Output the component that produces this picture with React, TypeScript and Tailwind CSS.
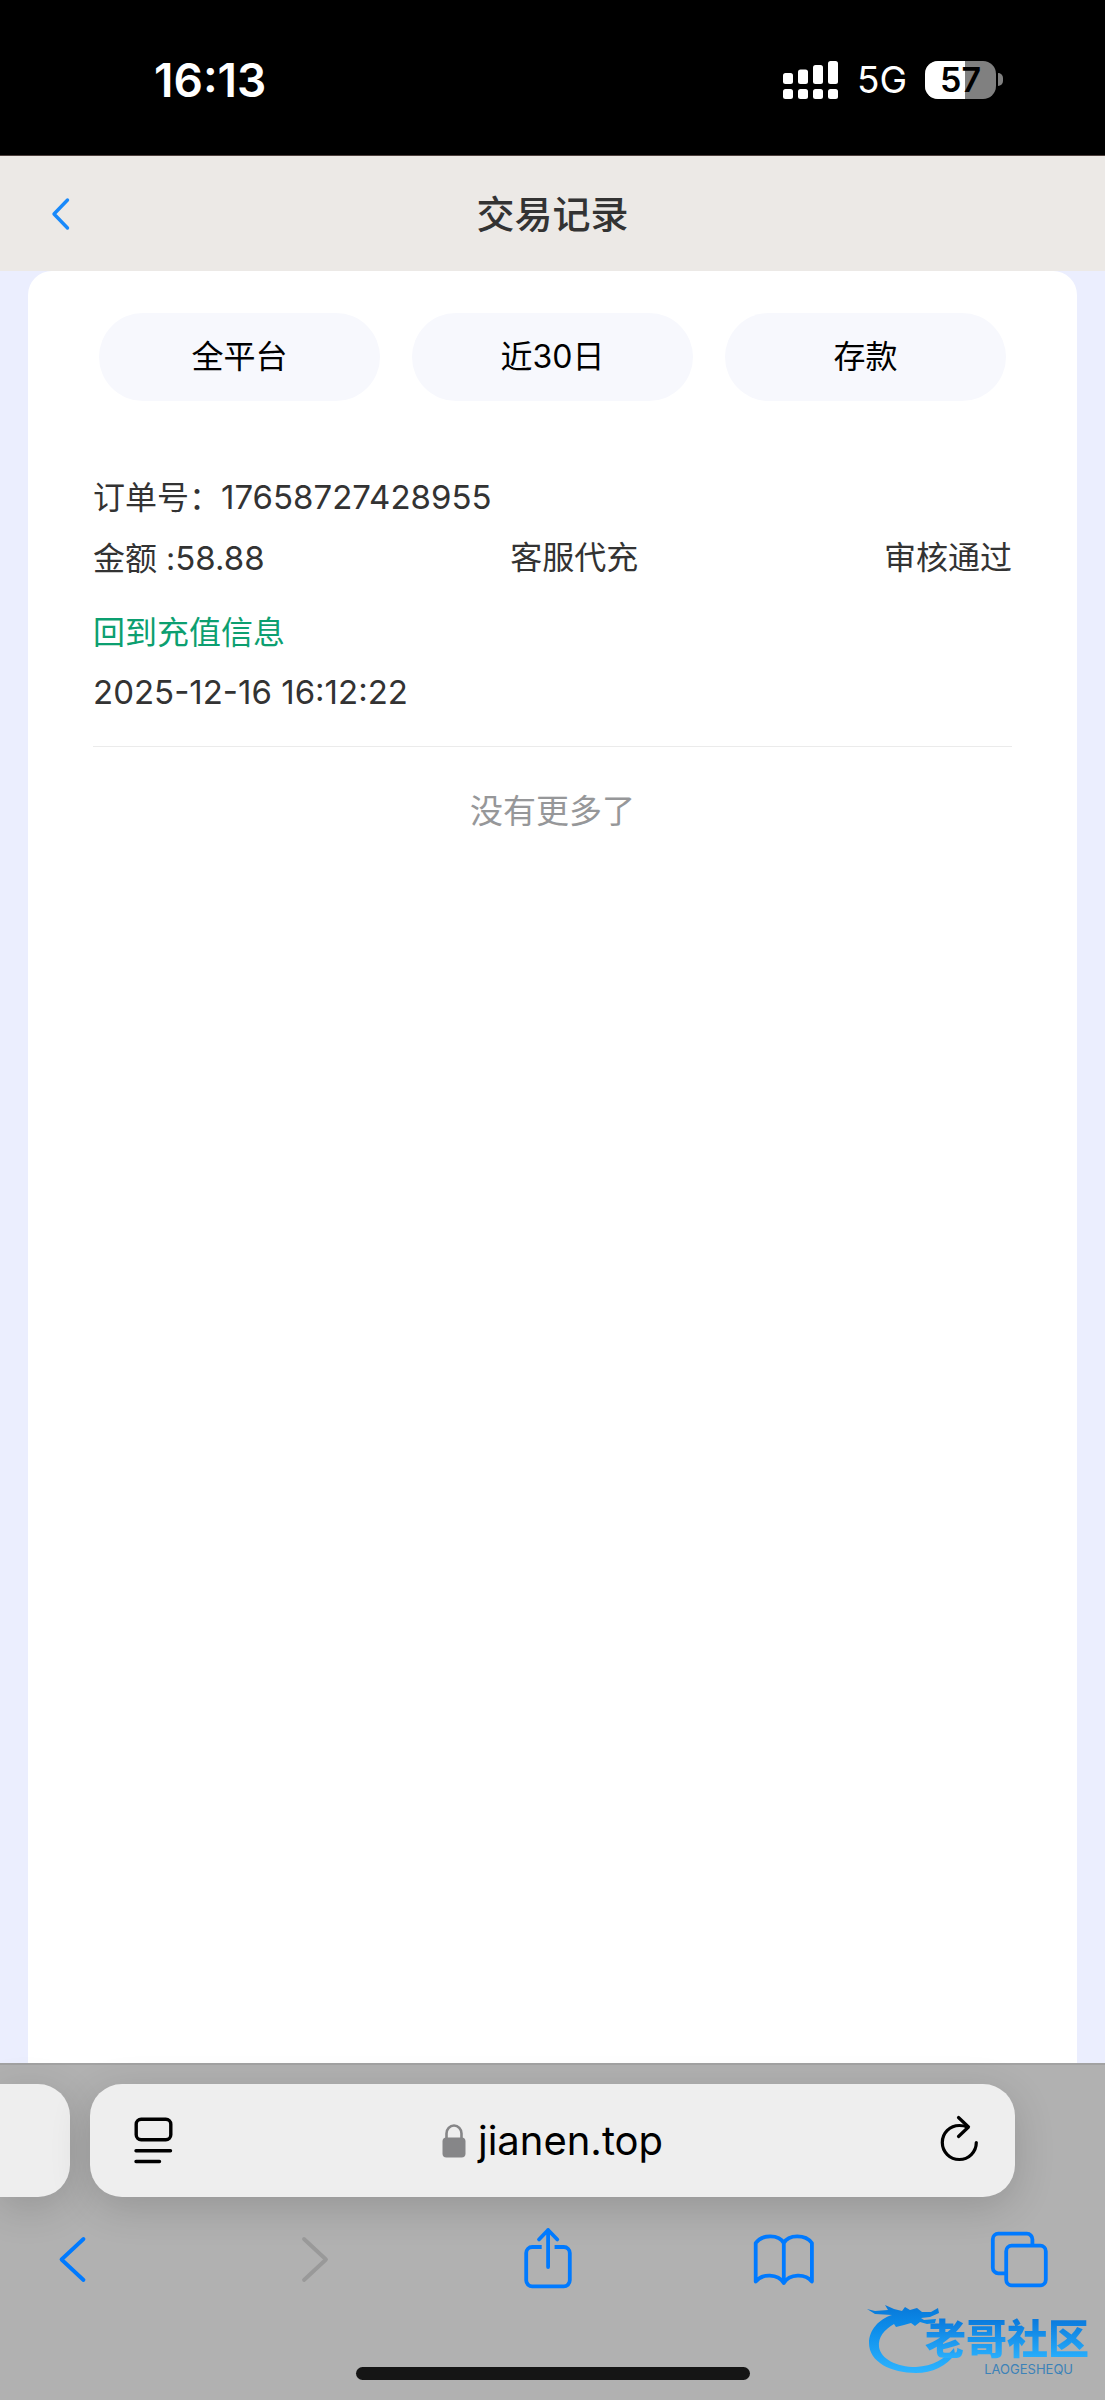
import type { ReactNode } from "react";

const filters = ["全平台", "近30日", "存款"];

const records = [
  {
    orderNo: "17658727428955",
    amount: "58.88",
    method: "客服代充",
    status: "审核通过",
    link: "回到充值信息",
    time: "2025-12-16 16:12:22"
  }
];

function SignalIcon() {
  return (
    <svg className="h-[38px] w-[56px]" viewBox="0 0 56 38" fill="#fff" aria-hidden="true">
      <rect x="0" y="12" width="10" height="11" rx="2.5" />
      <rect x="15" y="8.5" width="10" height="14.5" rx="2.5" />
      <rect x="30" y="4" width="10" height="19" rx="2.5" />
      <rect x="45" y="0" width="10" height="23" rx="2.5" />
      <rect x="0" y="28" width="10" height="10" rx="2.5" />
      <rect x="15" y="28" width="10" height="10" rx="2.5" />
      <rect x="30" y="28" width="10" height="10" rx="2.5" />
      <rect x="45" y="28" width="10" height="10" rx="2.5" />
    </svg>
  );
}

function Battery({ level }: { level: number }) {
  return (
    <div className="flex items-center gap-[2px]">
      <div className="relative h-[38px] w-[71px] overflow-hidden rounded-[13px] bg-[#808080]">
        <div className="absolute inset-y-0 left-0 bg-white" style={{ width: `${level}%` }} />
        <span className="relative flex h-full items-center justify-center text-[34px] font-semibold text-black">{level}</span>
      </div>
      <div className="h-[13px] w-[5px] rounded-r-full bg-[#808080]" />
    </div>
  );
}

function StatusBar() {
  return (
    <div className="flex h-[156px] items-center justify-between border-b border-[#4d403d] bg-black pt-1 pr-[102px] pl-[154px] text-white">
      <span className="text-[46px] leading-[54px] font-semibold">16:13</span>
      <div className="flex items-center gap-[18px]">
        <SignalIcon />
        <span className="text-[37px] leading-[38px]">5G</span>
        <Battery level={57} />
      </div>
    </div>
  );
}

function RecordItem({ record }: { record: (typeof records)[number] }) {
  return (
    <li className="border-b border-[#ebebeb] pb-[30px] text-[32px] leading-[48px] text-[#333]">
      <p>
        订单号：<span className="text-[33px]">{record.orderNo}</span>
      </p>
      <div className="mt-3 flex justify-between">
        <span>
          金额 :<span className="text-[33px]">{record.amount}</span>
        </span>
        <span>{record.method}</span>
        <span>{record.status}</span>
      </div>
      <a href="#recharge" className="mt-[26px] block text-[#0c9f70]">
        {record.link}
      </a>
      <p className="mt-[11px] text-[33px]">{record.time}</p>
    </li>
  );
}

function ToolbarButton({ label, disabled, children }: { label: string; disabled?: boolean; children: ReactNode }) {
  return (
    <button type="button" aria-label={label} disabled={disabled} className="text-[#007aff] disabled:text-[#999]">
      <svg
        className="size-16"
        viewBox="0 0 64 64"
        fill="none"
        stroke="currentColor"
        strokeWidth="3.8"
        strokeLinecap="round"
        strokeLinejoin="round"
      >
        {children}
      </svg>
    </button>
  );
}

function AddressBar() {
  return (
    <div className="flex h-[113px] flex-1 items-center justify-between rounded-[32px] bg-[#eee] px-7 shadow-[0_10px_40px_rgba(0,0,0,0.16)]">
      <button type="button" aria-label="Page menu">
        <svg className="size-14" viewBox="0 0 56 56" fill="none" stroke="#000" strokeWidth="3.4" strokeLinecap="round">
          <rect x="18.2" y="6.2" width="34.6" height="20.6" rx="5" />
          <path d="M18 37.7H52.5M18 48.5H41.5" />
        </svg>
      </button>
      <button type="button" className="flex items-center gap-3 text-[40px] leading-[48px] text-black">
        <svg className="h-[34px] w-6" viewBox="0 0 24 34" aria-hidden="true">
          <path d="M4.5 15V9.5a7.5 8 0 0 1 15 0V15" fill="none" stroke="#868688" strokeWidth="2.6" />
          <rect x="0.5" y="13.5" width="23" height="20" rx="4" fill="#868688" />
        </svg>
        jianen.top
      </button>
      <button type="button" aria-label="Reload">
        <svg
          className="size-14"
          viewBox="0 0 56 56"
          fill="none"
          stroke="#000"
          strokeWidth="3.2"
          strokeLinecap="round"
          strokeLinejoin="round"
        >
          <path d="M45.3 29.5A17 17 0 1 1 28.3 12.5Q33 12.5 36.5 14" />
          <path d="M27.5 4.5 37.5 14 27.5 23.5" />
        </svg>
      </button>
    </div>
  );
}

function Watermark() {
  return (
    <div className="absolute right-4 bottom-6 h-[72px] w-[222px]">
      <svg className="absolute inset-0 h-[72px] w-[96px]" viewBox="0 0 96 72" aria-hidden="true">
        <defs>
          <linearGradient id="dragon" x1="0" y1="0" x2="0" y2="1">
            <stop offset="0" stopColor="#0878d8" />
            <stop offset="0.35" stopColor="#0c8deb" />
            <stop offset="1" stopColor="#2db4ff" />
          </linearGradient>
        </defs>
        <path
          fill="url(#dragon)"
          d="M0 5 L8 7 L21 6 L18 1 L27 5 L35 7 L38 3 L43 6 L50 4 L55 8 L64 8 L71 4 L72 9 L63 13 L54 14 L57 16 L69 15 L68 19 L60 20 L53 18 L48 22 L44 19 L37 21 L29 23 L27 20 C17 26 11 33 12 43 C14 55 29 63 49 63 C66 62 78 55 87 44 L88 50 C80 62 65 69 49 69 C24 69 2 58 2 39 C2 26 12 15 25 11 L8 10 Z"
        />
      </svg>
      <div className="relative flex flex-col items-end">
        <span className="mt-3 bg-linear-to-b from-[#0875da] to-[#2cb4ff] bg-clip-text text-[41px] leading-[46px] font-black text-transparent">
          老哥社区
        </span>
        <span className="mr-4 text-[13px] leading-[14px] text-[#3c82b8]">LAOGESHEQU</span>
      </div>
    </div>
  );
}

function BrowserChrome() {
  return (
    <footer className="relative border-t-2 border-[#a2a2a2] bg-[#b1b1b1] pt-[19px] pb-5">
      <div className="flex gap-5 pr-[90px]">
        <div className="h-[113px] w-[70px] rounded-r-[32px] bg-[#eee] shadow-[0_10px_40px_rgba(0,0,0,0.16)]" />
        <AddressBar />
      </div>
      <nav className="mt-[29px] flex justify-between pr-[54px] pl-10">
        <ToolbarButton label="Back">
          <path d="M43.5 13 21.5 33.5 43.5 54" />
        </ToolbarButton>
        <ToolbarButton label="Forward" disabled>
          <path d="M27 13 49 33.5 27 54" />
        </ToolbarButton>
        <ToolbarButton label="Share">
          <path d="M27.7 21H18.2a6 6 0 0 0-6 6V54.3a6 6 0 0 0 6 6H49.8a6 6 0 0 0 6-6V27a6 6 0 0 0-6-6H40.6" strokeLinecap="butt" />
          <path d="M34.1 41V4M25 13.5 34.1 4 43.3 13.5" />
        </ToolbarButton>
        <ToolbarButton label="Bookmarks">
          <path d="M33.8 17C29 8.1 12 8.1 5.7 17V55.5C12 47.5 28 47.5 33.8 57C39.5 47.5 55.5 47.5 61.9 55.5V17C55.5 8.1 38.5 8.1 33.8 17ZM33.8 17V57" />
        </ToolbarButton>
        <ToolbarButton label="Tabs">
          <rect x="19.2" y="19.7" width="39.6" height="39.6" rx="5.5" />
          <path d="M45.4 19V13.2a5.5 5.5 0 0 0-5.5-5.5H11.3a5.5 5.5 0 0 0-5.5 5.5V41.8a5.5 5.5 0 0 0 5.5 5.5H18.5" strokeLinecap="butt" />
        </ToolbarButton>
      </nav>
      <div className="mx-auto mt-[77px] h-[13px] w-[394px] rounded-full bg-[#151515]" />
      <Watermark />
    </footer>
  );
}

export default function App() {
  return (
    <div className="flex min-h-screen flex-col bg-[#ebeefe] font-[Inter,'Noto_Sans_CJK_SC',sans-serif]">
      <StatusBar />

      <header className="grid h-[115px] grid-cols-[1fr_auto_1fr] items-center bg-[#ece9e6] px-12">
        <button type="button" aria-label="返回" className="justify-self-start">
          <svg className="h-10 w-6" viewBox="0 0 24 40" fill="none" stroke="#1989fa" strokeWidth="3.4" strokeLinecap="round" strokeLinejoin="round">
            <path d="M19.5 6 6 20 19.5 34" />
          </svg>
        </button>
        <h1 className="text-[38px] leading-[56px] font-medium text-[#333]">交易记录</h1>
      </header>

      <main className="mx-7 flex-1 rounded-t-3xl bg-white px-[65px] pt-[42px]">
        <div className="flex gap-8 px-[6px]">
          {filters.map((filter) => (
            <button key={filter} type="button" className="h-[88px] flex-1 rounded-full bg-[#f7f8fd] text-[32px] text-black">
              {filter}
            </button>
          ))}
        </div>
        <ul className="mt-[72px]">
          {records.map((record) => (
            <RecordItem key={record.orderNo} record={record} />
          ))}
        </ul>
        <p className="mt-10 text-center text-[33px] leading-[48px] text-[#969799]">没有更多了</p>
      </main>

      <BrowserChrome />
    </div>
  );
}
